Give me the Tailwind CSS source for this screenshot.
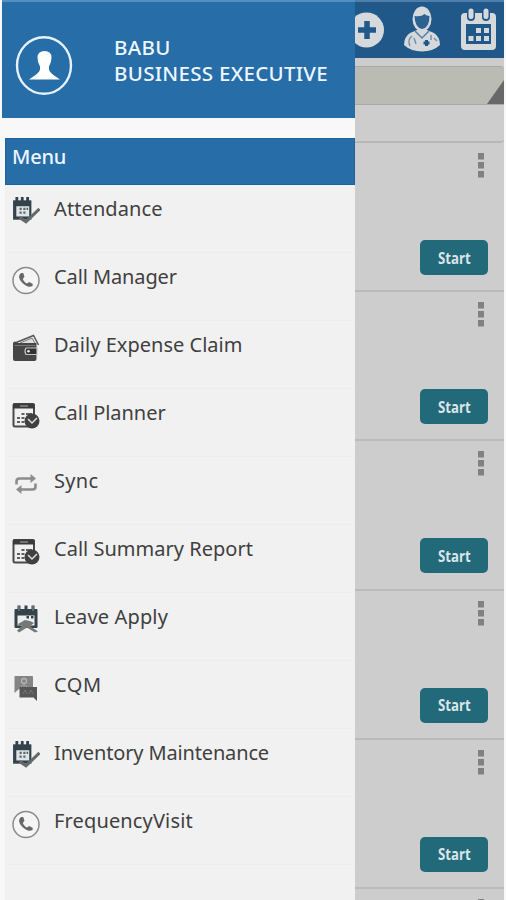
<!DOCTYPE html>
<html lang="en">
<head>
<meta charset="utf-8">
<title>Menu</title>
<script src="https://cdn.jsdelivr.net/npm/@tailwindcss/browser@4"></script>
</head>
<body class="bg-[#f8f8f8] font-['Noto_Sans',sans-serif]">
<svg class="hidden">
  <symbol id="attend" viewBox="1 0 26 26">
    <path d="M2 4h17v18H2z" fill="#34434b"/><path d="M5 9.500h12v9.500H5z" fill="#dfe4e6"/>
    <path d="M5.500 1v5M10.500 1v5M15.500 1v5" stroke="#34434b" stroke-width="2.600"/>
    <path d="M8 11h2v2H8zM11.500 11h2v2h-2zM8 14.500h2v2H8zM11.500 14.500h2v2h-2zM14.500 11h1.500v2h-1.500z" fill="#59666c"/>
    <path d="M8 20l6 4L26.500 12" fill="none" stroke="#63696c" stroke-width="2.800"/>
  </symbol>
  <symbol id="phone" viewBox="0 0 28 28">
    <circle cx="14" cy="14" r="13" fill="#f5f5f5" stroke="#8b8b8b" stroke-width="1.500"/>
    <path d="M9.200 6.600c-3.600 2.200-2 6.800 1 9.600s7.300 5.800 10.700 2.800l-.4-1.800-3.300-1.800-2.200 1.500c-2-.8-3.700-2.600-4.200-4.400l1.700-2.300-1.300-3.600z" fill="#686868"/>
  </symbol>
  <symbol id="wallet" viewBox="0 0 28 28">
    <path d="M3 9L21.500 1.500 26.500 11" fill="#f3f3f3" stroke="#555" stroke-width="1.500"/><path d="M8 9l12-5 3 5" fill="#ddd" stroke="#777"/>
    <path d="M1 9.500q0-2 2-2l3 1.500h18.500V25q0 2-2 2H3q-2 0-2-2z" fill="#464646"/>
    <path d="M2.500 11.500h21" stroke="#777"/>
    <path d="M14 14h11v6.500H14q-2-3.200 0-6.500z" fill="#303030" stroke="#c5c5c5" stroke-width="1.200"/><circle cx="16.500" cy="17.200" r="1.300" fill="#eee"/>
  </symbol>
  <symbol id="planner" viewBox="0 0 28 28">
    <rect x="1.500" y="2" width="20.500" height="22.500" rx="1.500" fill="#f0f0f0" stroke="#4a4a4a" stroke-width="2"/>
    <path d="M1 1.500h21.500v5H1z" fill="#3b3b3b"/><path d="M8 4h8" stroke="#888" stroke-width="1.500"/>
    <path d="M5 15h3v2H5zM5 19h3v2H5zM9.500 11h3v2h-3zM9.500 15h3v2h-3zM9.500 19h3v2h-3zM14 11h6v2h-6z" fill="#606060"/>
    <circle cx="20" cy="19" r="7.500" fill="#404040"/><path d="M16 17l4 4 5-5" fill="none" stroke="#ddd" stroke-width="1.500"/>
  </symbol>
  <symbol id="sync" viewBox="0 0 28 28">
    <path d="M4.500 14.500v-3q0-3 3-3H21M23.500 13.500v3q0 3-3 3H7" fill="none" stroke="#8c8c8c" stroke-width="2.600"/>
    <path d="M18.500 4L24 8.500l-5.500 4.500zM9.500 15L4 19.500l5.500 4.500z" fill="#8c8c8c"/>
  </symbol>
  <symbol id="leave" viewBox="0 0 28 28">
    <rect x="2.500" y="4" width="23" height="19" rx="1" fill="#34434b"/><path d="M5.500 10.500h17v10h-17z" fill="#eceff0"/>
    <path d="M7 .5v6M14 .5v6M21 .5v6" stroke="#34434b" stroke-width="3"/><path d="M7 1v5M21 1v5" stroke="#a3abb0" stroke-width=".8"/>
    <path d="M14.500 11h2.500v2.500h-2.500zM19 11h2.500v2.500H19z" fill="#34434b"/>
    <path d="M6 19l7-4 5 1 4 2-4 3 8 5.500-3 1-8-5-8 5-2-2 6-5.500-4 1z" fill="#777"/>
  </symbol>
  <symbol id="chat" viewBox="0 0 28 28">
    <path d="M3 2h17q1 0 1 1v12H7l-4.500 4V3q0-1 .5-1z" fill="#848484"/>
    <circle cx="12" cy="7" r="2.500" fill="none" stroke="#b5b5b5" stroke-width="1.300"/><path d="M9 13q3-4 6 0" fill="none" stroke="#a8a8a8"/>
    <path d="M7.500 13H25v14l-3.500-3.500h-14z" fill="#565656"/><path d="M11 20l2-4 2 4M17 20l2-4 2 4" fill="none" stroke="#777"/>
  </symbol>
</svg>

<div class="relative w-[506px] h-[900px] overflow-hidden">
  <!-- Screen behind the drawer -->
  <main class="ml-[5px] w-[499px] h-[900px] bg-[#cdcdcd] flex flex-col">
    <header class="h-[58px] shrink-0 bg-[#20588a] border-t-2 border-[#4d7faa] flex">
      <svg class="ml-[341px] w-[158px] h-[56px]" viewBox="346 2 158 56">
        <circle cx="366.500" cy="30" r="17.500" fill="#d5d9dc"/><path d="M367 21v18M358 30h18" stroke="#20588a" stroke-width="5.500"/>
        <path d="M404 45q0-8 6-12l7-3h10l7 3q6 4 6 12-7 6.500-18 6.500T404 45z" fill="#d5d9dc"/>
        <ellipse cx="422" cy="19" rx="9.500" ry="12.500" fill="#d5d9dc"/>
        <path d="M414.500 16q7 1 10-2 2 2 5 2 0 12-7.500 13-7-1-7.500-13z" fill="#2c6190"/>
        <path d="M415 31l7 7 7-7" fill="none" stroke="#5481a5" stroke-width="1.500"/>
        <path d="M412 36q-5 4-2 10M414 38l2 6M431 35v5M434 38l3 3" fill="none" stroke="#6e93b2" stroke-width="1.500"/>
        <path d="M426.500 40v6M423.500 43h6" stroke="#20588a" stroke-width="3"/>
        <rect x="461" y="13" width="35" height="37" rx="4" fill="#d5d9dc"/>
        <rect x="466" y="24" width="25" height="20" fill="#20588a"/>
        <path d="M476 28h5v5h-5zM484 28h5v5h-5zM468.500 36h5v5h-5zM476 36h5v5h-5zM484 36h5v5h-5z" fill="#d5d9dc"/>
        <path d="M471 11v6M486 11v6" stroke="#20588a" stroke-width="8" stroke-linecap="round"/>
        <path d="M471 11v5.500M486 11v5.500" stroke="#d5d9dc" stroke-width="5" stroke-linecap="round"/>
      </svg>
    </header>
    <div class="mt-[8px] h-[39px] shrink-0 bg-[#babbb2] border-y border-[#a9a9a6] rounded-t-[4px] flex justify-end items-end">
      <svg class="w-[17px] h-[24px]" viewBox="0 0 17 24"><path d="M17 0v24H0z" fill="#686868"/></svg>
    </div>
    <div class="h-[38px] shrink-0 border-b-2 border-[#b7b7b7] rounded-b-[4px]"></div>
    <section class="h-[149.200px] shrink-0 border-b-2 border-[#bababa] flex flex-col items-end pr-[16px] pt-[10px]">
      <svg class="w-[6px] h-[25px] mr-[4px]" viewBox="0 0 6 25"><path d="M0 0h6v6.500H0zM0 9h6v6.500H0zM0 18h6v6.500H0z" fill="#818181"/></svg>
      <button class="mt-[62px] w-[68px] h-[35px] rounded-[5px] bg-[#22697a] text-[#dbe5e8] text-[16.500px] font-bold font-['Open_Sans',sans-serif]"><span class="inline-block scale-x-[.8] pt-px">Start</span></button>
    </section>
    <section class="h-[149.200px] shrink-0 border-b-2 border-[#bababa] flex flex-col items-end pr-[16px] pt-[10px]">
      <svg class="w-[6px] h-[25px] mr-[4px]" viewBox="0 0 6 25"><path d="M0 0h6v6.500H0zM0 9h6v6.500H0zM0 18h6v6.500H0z" fill="#818181"/></svg>
      <button class="mt-[62px] w-[68px] h-[35px] rounded-[5px] bg-[#22697a] text-[#dbe5e8] text-[16.500px] font-bold font-['Open_Sans',sans-serif]"><span class="inline-block scale-x-[.8] pt-px">Start</span></button>
    </section>
    <section class="h-[149.200px] shrink-0 border-b-2 border-[#bababa] flex flex-col items-end pr-[16px] pt-[10px]">
      <svg class="w-[6px] h-[25px] mr-[4px]" viewBox="0 0 6 25"><path d="M0 0h6v6.500H0zM0 9h6v6.500H0zM0 18h6v6.500H0z" fill="#818181"/></svg>
      <button class="mt-[62px] w-[68px] h-[35px] rounded-[5px] bg-[#22697a] text-[#dbe5e8] text-[16.500px] font-bold font-['Open_Sans',sans-serif]"><span class="inline-block scale-x-[.8] pt-px">Start</span></button>
    </section>
    <section class="h-[149.200px] shrink-0 border-b-2 border-[#bababa] flex flex-col items-end pr-[16px] pt-[10px]">
      <svg class="w-[6px] h-[25px] mr-[4px]" viewBox="0 0 6 25"><path d="M0 0h6v6.500H0zM0 9h6v6.500H0zM0 18h6v6.500H0z" fill="#818181"/></svg>
      <button class="mt-[62px] w-[68px] h-[35px] rounded-[5px] bg-[#22697a] text-[#dbe5e8] text-[16.500px] font-bold font-['Open_Sans',sans-serif]"><span class="inline-block scale-x-[.8] pt-px">Start</span></button>
    </section>
    <section class="h-[149.200px] shrink-0 border-b-2 border-[#bababa] flex flex-col items-end pr-[16px] pt-[10px]">
      <svg class="w-[6px] h-[25px] mr-[4px]" viewBox="0 0 6 25"><path d="M0 0h6v6.500H0zM0 9h6v6.500H0zM0 18h6v6.500H0z" fill="#818181"/></svg>
      <button class="mt-[62px] w-[68px] h-[35px] rounded-[5px] bg-[#22697a] text-[#dbe5e8] text-[16.500px] font-bold font-['Open_Sans',sans-serif]"><span class="inline-block scale-x-[.8] pt-px">Start</span></button>
    </section>
    <section class="flex justify-end pr-[20px] pt-[10px]"><i class="w-[6px] h-[6px] bg-[#818181]"></i></section>
  </main>

  <!-- Navigation drawer -->
  <aside class="absolute left-0 top-0 w-[355px] h-[900px] bg-[#f8f8f8] flex flex-col">
    <div class="ml-[2px] h-[118px] shrink-0 bg-[#276da8] border-t-2 border-[#558fbd] flex text-[#eef6ff]">
      <svg class="ml-[13px] mt-[33px] w-[58px] h-[60px]" viewBox="0 0 58 60">
        <ellipse cx="29" cy="30.500" rx="27" ry="28.300" fill="none" stroke="#e6f2fd" stroke-width="2.400"/>
        <path d="M22.500 22.500q0-6.500 7-6.500t7 6.500q0 5-2.500 9v3q0 3 11 10H14q11-7 11-10v-3q-2.500-4-2.500-9z" fill="#fff"/>
      </svg>
      <div class="ml-[41px] mt-[32px] text-[20.500px] leading-[26px] tracking-[.3px] font-medium whitespace-nowrap">
        <div><span>BABU</span></div><div><span>BUSINESS EXECUTIVE</span></div>
      </div>
    </div>
    <div class="ml-[5px] mt-[20px] h-[47px] shrink-0 bg-[#276da8] border border-[#1d629f] text-[#eef6ff] text-[20px] leading-[36px] tracking-[-.2px] font-medium pl-[6px]">Menu</div>
    <nav class="ml-[5px] flex-1 bg-[#f1f1f1] text-[#404040] text-[20px] leading-[47px] whitespace-nowrap">
      <a class="flex h-[68px] border-b border-[#ededed] pl-[7px]"><svg class="w-[28px] h-[28px] mt-[11px] mr-[14px]"><use href="#attend"/></svg><span class="tracking-[.1px]">Attendance</span></a>
      <a class="flex h-[68px] border-b border-[#ededed] pl-[7px]"><svg class="w-[28px] h-[29px] mt-[13px] mr-[14px]"><use href="#phone"/></svg><span class="tracking-[-.1px]">Call Manager</span></a>
      <a class="flex h-[68px] border-b border-[#ededed] pl-[7px]"><svg class="w-[28px] h-[28px] mt-[13px] mr-[14px]"><use href="#wallet"/></svg><span class="tracking-[.02px]">Daily Expense Claim</span></a>
      <a class="flex h-[68px] border-b border-[#ededed] pl-[7px]"><svg class="w-[28px] h-[28px] mt-[13px] mr-[14px]"><use href="#planner"/></svg><span class="tracking-[-.04px]">Call Planner</span></a>
      <a class="flex h-[68px] border-b border-[#ededed] pl-[7px]"><svg class="w-[28px] h-[28px] mt-[13px] mr-[14px]"><use href="#sync"/></svg><span class="tracking-[.3px]">Sync</span></a>
      <a class="flex h-[68px] border-b border-[#ededed] pl-[7px]"><svg class="w-[28px] h-[28px] mt-[13px] mr-[14px]"><use href="#planner"/></svg><span class="tracking-[.02px]">Call Summary Report</span></a>
      <a class="flex h-[68px] border-b border-[#ededed] pl-[7px]"><svg class="w-[28px] h-[28px] mt-[12px] mr-[14px]"><use href="#leave"/></svg><span class="tracking-[.15px]">Leave Apply</span></a>
      <a class="flex h-[68px] border-b border-[#ededed] pl-[7px]"><svg class="w-[28px] h-[28px] mt-[13px] mr-[14px]"><use href="#chat"/></svg><span class="tracking-[.6px]">CQM</span></a>
      <a class="flex h-[68px] border-b border-[#ededed] pl-[7px]"><svg class="w-[28px] h-[28px] mt-[11px] mr-[14px]"><use href="#attend"/></svg><span class="tracking-[-.15px]">Inventory Maintenance</span></a>
      <a class="flex h-[68px] border-b border-[#ededed] pl-[7px]"><svg class="w-[28px] h-[29px] mt-[13px] mr-[14px]"><use href="#phone"/></svg><span class="tracking-[.15px]">FrequencyVisit</span></a>
    </nav>
  </aside>
</div>
</body>
</html>
